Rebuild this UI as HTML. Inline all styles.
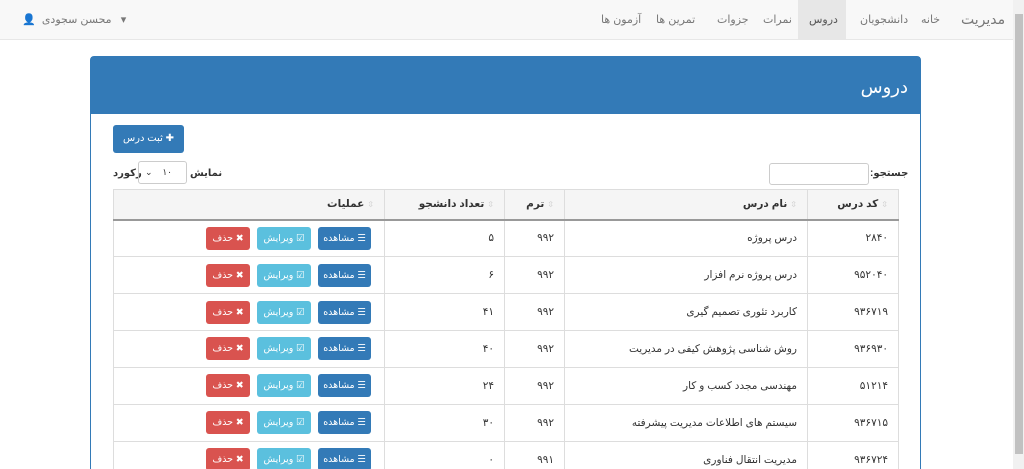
<!DOCTYPE html>
<html><head><meta charset="utf-8"><style>
*{box-sizing:border-box;margin:0;padding:0}
html,body{width:1024px;height:469px;overflow:hidden}
body{background:#fff;font-family:"Liberation Sans","DejaVu Sans",sans-serif;font-size:11px;color:#333;position:relative;direction:rtl}
.nav{position:absolute;left:0;top:0;width:1013px;height:40px;background:#f8f8f8;border-bottom:1px solid #e7e7e7}
.nav span{position:absolute;top:13px;color:#777;font-size:11px;white-space:nowrap}
.sb{position:absolute;left:1013px;top:0;width:11px;height:469px;background:#f1f1f1}
.sb i{position:absolute;left:2px;top:14px;width:8px;height:440px;background:#c1c1c1}
.panel{position:absolute;left:90px;top:56px;width:831px;height:430px;border:1px solid #337ab7;border-radius:4px 4px 0 0;background:#fff}
.ph{height:57px;background:#337ab7;color:#fff;font-size:18px;padding:20px 12px 0 0}
.btn{position:absolute;color:#fff;border-radius:3px;font-size:9.5px;text-align:center;white-space:nowrap}
table{position:absolute;left:113px;top:189px;width:786px;border-collapse:collapse}
td,th{border:1px solid #ddd;height:37px;padding:0 10px;text-align:right;font-size:10.5px;font-weight:normal;color:#333}
th{height:30px;background:#f5f5f5;font-weight:bold;border-bottom:2px solid #999}
th:before{content:"⇳";color:#ccc;font-size:8px;margin-left:3px;font-weight:normal}
.ops{padding:0}
.b{position:absolute;height:23px;line-height:23px;border-radius:3px;color:#fff;font-size:9.5px;text-align:center}
</style></head><body>
<div class="nav">
<div style="position:absolute;left:798px;top:0;width:48px;height:39px;background:#e7e7e7"></div>
<span style="left:961px;top:11px;font-size:14px">مدیریت</span>
<span style="left:921px">خانه</span>
<span style="left:860px">دانشجویان</span>
<span style="left:809px;color:#555">دروس</span>
<span style="left:763px">نمرات</span>
<span style="left:717px">جزوات</span>
<span style="left:656px">تمرین ها</span>
<span style="left:601px">آزمون ها</span>
<span style="left:22px">▾ &nbsp;&nbsp;محسن سجودی &nbsp;<b style="color:#777">👤</b></span>
</div>
<div class="sb"><i></i></div>
<div class="panel"><div class="ph">دروس</div></div>
<div class="btn" style="left:113px;top:125px;width:71px;height:28px;line-height:28px;background:#337ab7;font-size:10px">✚ ثبت درس</div>
<div style="position:absolute;left:769px;top:163px;width:100px;height:22px;border:1px solid #ccc;border-radius:3px"></div>
<span style="position:absolute;left:870px;top:168px;font-size:10px;font-weight:bold">جستجو:</span>
<span style="position:absolute;left:113px;top:168px;font-size:10px;font-weight:bold">رکورد</span>
<div style="position:absolute;left:138px;top:161px;width:49px;height:23px;border:1px solid #ccc;border-radius:3px;font-size:9px;line-height:21px;padding:0 6px"><span style="float:left">⌄</span><span style="margin-right:8px">۱۰</span></div>
<span style="position:absolute;left:190px;top:168px;font-size:10px;font-weight:bold">نمایش</span>
<table>
<tr><th style="width:91px">کد درس</th><th style="width:243px">نام درس</th><th style="width:60px">ترم</th><th style="width:120px">تعداد دانشجو</th><th>عملیات</th></tr>
<tr><td>۲۸۴۰</td><td>درس پروژه</td><td>۹۹۲</td><td>۵</td><td class="ops"></td></tr>
<tr><td>۹۵۲۰۴۰</td><td>درس پروژه نرم افزار</td><td>۹۹۲</td><td>۶</td><td class="ops"></td></tr>
<tr><td>۹۳۶۷۱۹</td><td>کاربرد تئوری تصمیم گیری</td><td>۹۹۲</td><td>۴۱</td><td class="ops"></td></tr>
<tr><td>۹۳۶۹۳۰</td><td>روش شناسی پژوهش کیفی در مدیریت</td><td>۹۹۲</td><td>۴۰</td><td class="ops"></td></tr>
<tr><td>۵۱۲۱۴</td><td>مهندسی مجدد کسب و کار</td><td>۹۹۲</td><td>۲۴</td><td class="ops"></td></tr>
<tr><td>۹۳۶۷۱۵</td><td>سیستم های اطلاعات مدیریت پیشرفته</td><td>۹۹۲</td><td>۳۰</td><td class="ops"></td></tr>
<tr><td>۹۳۶۷۲۴</td><td>مدیریت انتقال فناوری</td><td>۹۹۱</td><td>۰</td><td class="ops"></td></tr>
</table>
<div id="btns"></div>
<script>
var h='';for(var i=0;i<7;i++){var y=227+i*36.8;
h+='<div class="b" style="left:318px;top:'+y+'px;width:53px;background:#337ab7">☰ مشاهده</div>'+
'<div class="b" style="left:257px;top:'+y+'px;width:54px;background:#5bc0de">☑ ویرایش</div>'+
'<div class="b" style="left:206px;top:'+y+'px;width:44px;background:#d9534f">✖ حذف</div>';}
document.getElementById('btns').innerHTML=h;
</script>
</body></html>
